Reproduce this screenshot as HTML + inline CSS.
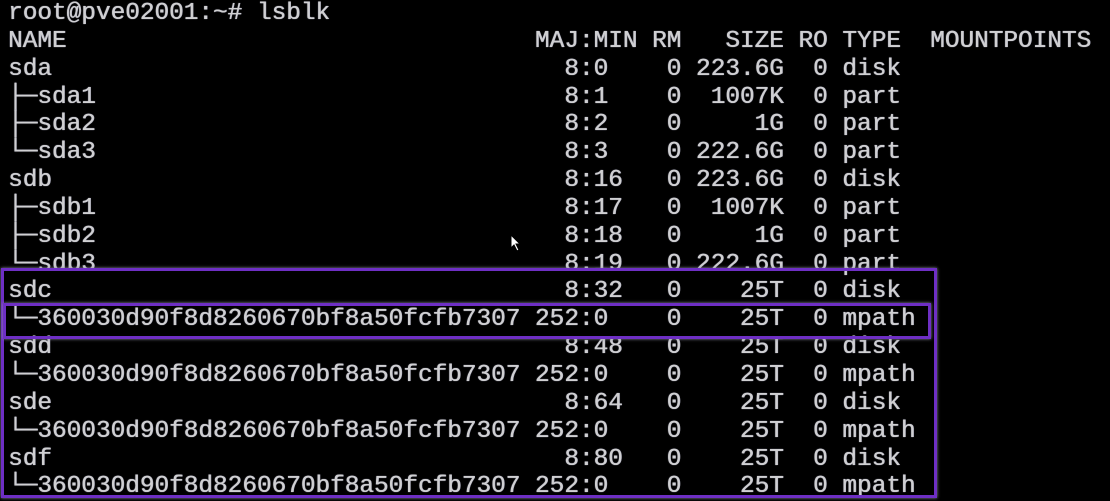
<!DOCTYPE html>
<html><head><meta charset="utf-8"><style>
html,body{margin:0;padding:0;background:#000;width:1110px;height:501px;overflow:hidden}
pre{position:absolute;left:8px;top:0px;margin:0;font-family:"Liberation Mono","DejaVu Sans Mono",monospace;font-size:24.4px;line-height:27.85px;color:#d0d0d2;letter-spacing:0;text-shadow:0.5px 0 0 #b0b0c0,0 0 1px #9a9ab0}
.box{position:absolute;border:3px solid #6e2fc4;box-shadow:0 0 3px #8f8fa0}
</style></head><body>
<pre>root@pve02001:~# lsblk
NAME                                MAJ:MIN RM   SIZE RO TYPE  MOUNTPOINTS
sda                                   8:0    0 223.6G  0 disk
├─sda1                                8:1    0  1007K  0 part
├─sda2                                8:2    0     1G  0 part
└─sda3                                8:3    0 222.6G  0 part
sdb                                   8:16   0 223.6G  0 disk
├─sdb1                                8:17   0  1007K  0 part
├─sdb2                                8:18   0     1G  0 part
└─sdb3                                8:19   0 222.6G  0 part
sdc                                   8:32   0    25T  0 disk
└─360030d90f8d8260670bf8a50fcfb7307 252:0    0    25T  0 mpath
sdd                                   8:48   0    25T  0 disk
└─360030d90f8d8260670bf8a50fcfb7307 252:0    0    25T  0 mpath
sde                                   8:64   0    25T  0 disk
└─360030d90f8d8260670bf8a50fcfb7307 252:0    0    25T  0 mpath
sdf                                   8:80   0    25T  0 disk
└─360030d90f8d8260670bf8a50fcfb7307 252:0    0    25T  0 mpath</pre>
<div class="box" style="left:1px;top:268px;width:930px;height:224px"></div>
<div class="box" style="left:3px;top:303px;width:922px;height:30px"></div>
<svg style="position:absolute;left:510px;top:234px" width="12" height="18" viewBox="0 0 12 18"><path d="M1 1 L1 14 L4 11 L7 17 L9 16 L6 10 L10 10 Z" fill="#fff" stroke="#000" stroke-width="1"/></svg>
</body></html>
